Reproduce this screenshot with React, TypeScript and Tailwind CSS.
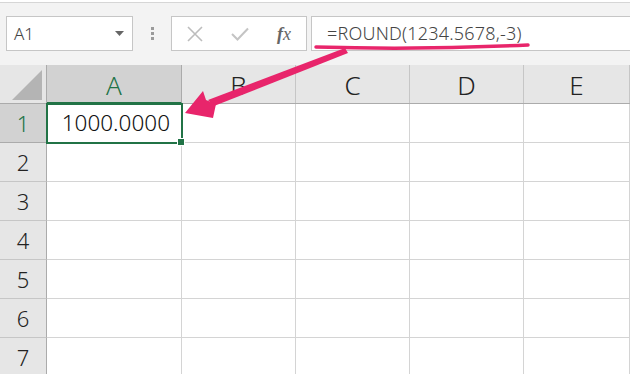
import React from 'react'

const COLS = ['A', 'B', 'C', 'D', 'E']
const COL_W = ['w-[135px]', 'w-[114px]', 'w-[114px]', 'w-[114px]', 'flex-1']
const ROWS = [1, 2, 3, 4, 5, 6, 7]

const FONT = { fontFamily: '"Noto Sans", "Noto Sans CJK JP", sans-serif' }

function Toolbar(): React.ReactElement {
  return (
    <div className="h-[63px] bg-[#f3f3f3] border-t-[1px] border-[#d6d6d6] mt-[2px] flex items-start pt-[13px] pl-[6px] shrink-0">
      {/* name box */}
      <div className="w-[127px] h-[35px] bg-white border border-[#c6c6c6] flex items-center justify-between pl-[7px] pr-[8px]">
        <span className="text-[17px] font-light text-[#444]" style={FONT}>A1</span>
        <svg width="9" height="5" viewBox="0 0 9 5">
          <path d="M0 0 L9 0 L4.5 5 Z" fill="#666" />
        </svg>
      </div>
      {/* dots */}
      <div className="w-[38px] h-[35px] flex flex-col items-center justify-center gap-[2px]">
        <div className="w-[3px] h-[3px] bg-[#9a9a9a]" />
        <div className="w-[3px] h-[3px] bg-[#9a9a9a]" />
        <div className="w-[3px] h-[3px] bg-[#9a9a9a]" />
      </div>
      {/* buttons */}
      <div className="w-[136px] h-[35px] bg-white border border-[#c6c6c6] flex items-center pl-[15px]">
        <svg width="16" height="16" viewBox="0 0 16 16">
          <path d="M1 1 L15 15 M15 1 L1 15" stroke="#bdbdbd" strokeWidth="1.6" />
        </svg>
        <svg width="18" height="14" viewBox="0 0 18 14" className="ml-[28px]">
          <path d="M1 7 L6.5 12.5 L17 1.5" stroke="#c4c4c4" strokeWidth="2" fill="none" />
        </svg>
        <span
          className="ml-[28px] text-[18px] italic text-[#666] leading-none"
          style={{ fontFamily: '"Liberation Serif", serif' }}
        >
          <b className="font-bold">f</b>x
        </span>
      </div>
      {/* formula */}
      <div className="ml-[4px] flex-1 h-[35px] bg-white border border-[#c6c6c6] border-r-0 flex items-center pl-[15px]">
        <span className="text-[18px] font-light text-[#444] tracking-[0.2px]" style={FONT}>
          =ROUND(1234.5678,-3)
        </span>
      </div>
    </div>
  )
}

function HeaderRow(): React.ReactElement {
  return (
    <div className="flex h-[39px] bg-[#e6e6e6] border-b border-[#ababab] shrink-0">
      <div className="w-[47px] border-r border-[#ababab] flex items-end justify-end pb-[2px] pr-[3px]">
        <svg width="32" height="32" viewBox="0 0 32 32">
          <path d="M31 1 L31 31 L1 31 Z" fill="#b4b4b4" />
        </svg>
      </div>
      {COLS.map((c, i) => (
        <div
          key={c}
          className={`${COL_W[i]} flex items-center justify-center text-[26px] font-light leading-none pt-[2px] ${
            i === 0
              ? 'bg-[#d2d2d2] text-[#217346] border-r border-[#ababab] border-b-2 border-b-[#217346] -mb-px'
              : 'text-[#222] border-r border-[#c6c6c6]'
          }`}
          style={FONT}
        >
          {c}
        </div>
      ))}
    </div>
  )
}

function Row({ n }: { n: number }): React.ReactElement {
  const sel = n === 1
  return (
    <div className="flex h-[39px] shrink-0">
      <div
        className={`w-[47px] border-r border-b flex items-center justify-center text-[22px] font-light leading-none ${
          sel ? 'bg-[#d2d2d2] text-[#217346] border-r-[#217346] border-b-[#ababab]' : 'bg-[#e6e6e6] text-[#222] border-r-[#ababab] border-b-[#c6c6c6]'
        }`}
        style={FONT}
      >
        {n}
      </div>
      {COLS.map((c, i) => (
        <div
          key={c}
          className={`${COL_W[i]} relative border-r border-b border-[#d4d4d4]`}
        >
          {sel && i === 0 && (
            <div className="absolute -left-px -top-px w-[137px] h-[41px] border-2 border-[#217346] flex items-center justify-end pr-[11px] z-10">
              <span className="text-[22.5px] font-light leading-none text-[#111]" style={FONT}>1000.0000</span>
              <div className="absolute -right-[4px] -bottom-[4px] w-[6px] h-[6px] bg-[#217346] border border-white box-content" />
            </div>
          )}
        </div>
      ))}
    </div>
  )
}

export default function App(): React.ReactElement {
  return (
    <div className="relative w-[630px] h-[374px] overflow-hidden bg-white flex flex-col select-none">
      <Toolbar />
      <HeaderRow />
      {ROWS.map((n) => (
        <Row key={n} n={n} />
      ))}

      {/* annotation arrow */}
      <svg className="absolute left-0 top-0 pointer-events-none z-20" width="630" height="374" viewBox="0 0 630 374">
        <path d="M316 47 Q420 50 528 45" stroke="#e8256b" strokeWidth="3.5" fill="none" strokeLinecap="round" />
        <path d="M345 48 L348 53 L214 106 L208 100 Z" fill="#e8256b" />
        <path d="M185 113 L203 91 L206 100 L216 104 L213 118 Z" fill="#e8256b" />
      </svg>
    </div>
  )
}
